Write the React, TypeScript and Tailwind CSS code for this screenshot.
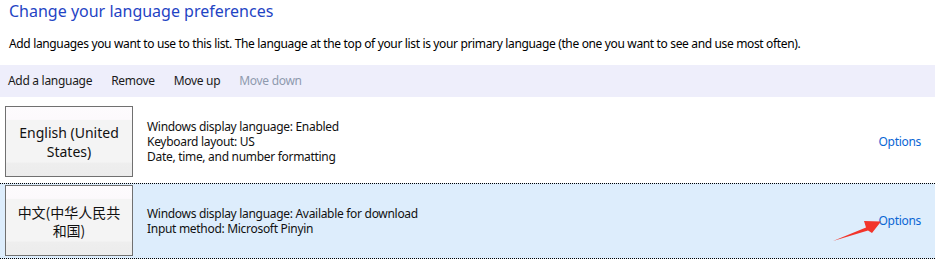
import React from 'react';

const FONT = '"Noto Sans", "Noto Sans CJK SC", sans-serif';

function LangButton({ lines, cjk }: { lines: string[]; cjk?: boolean }) {
  return (
    <div
      className="flex h-[71px] w-[128px] shrink-0 flex-col items-center justify-center border border-[#707070] bg-[linear-gradient(to_bottom,#fdfbfd_0%,#fcf9fc_18%,#f4f4f4_19%,#f4f4f4_80%,#eeeeee_81%,#ececec_100%)] text-[#111]"
      style={{ fontFamily: cjk ? '"Noto Sans CJK SC", sans-serif' : FONT }}
    >
      {lines.map((l) => (
        <div key={l} className={cjk ? 'text-[14px] leading-[18px]' : 'text-[14px] leading-[19px]'}>
          {l}
        </div>
      ))}
    </div>
  );
}

export default function App() {
  return (
    <div className="relative h-[269px] w-[935px] overflow-hidden bg-white text-black" style={{ fontFamily: FONT }}>
      <h1 className="pl-[9px] text-[16px] leading-[22px] text-[#1f44c4]">Change your language preferences</h1>
      <p className="mt-[14px] pl-[9px] text-[12px] leading-[16px] tracking-[-0.35px]">
        Add languages you want to use to this list. The language at the top of your list is your primary language (the one you want to see and use most often).
      </p>

      <div className="mt-[13px] flex h-[32px] items-center gap-[19px] bg-[#eeeefb] pl-[8px] text-[12px] tracking-[-0.3px] text-[#1a1a1a]">
        <span>Add a language</span>
        <span>Remove</span>
        <span>Move up</span>
        <span className="text-[#8f9aae]">Move down</span>
      </div>

      <div className="flex items-center pb-[6px] pl-[5px] pr-[14px] pt-[9px]">
        <LangButton lines={['English (United', 'States)']} />
        <div className="ml-[14px] flex-1 text-[12px] leading-[15px] tracking-[-0.3px] text-[#111]">
          <div>Windows display language: Enabled</div>
          <div>Keyboard layout: US</div>
          <div>Date, time, and number formatting</div>
        </div>
        <a className="text-[12px] tracking-[-0.3px] text-[#0a66d4]">Options</a>
      </div>

      <div className="flex items-center border-y border-dotted border-black bg-[#ddedfc] pb-[2px] pl-[5px] pr-[14px] pt-[1px]">
        <LangButton lines={['中文(中华人民共', '和国)']} cjk />
        <div className="ml-[14px] flex-1 text-[12px] leading-[15px] tracking-[-0.3px] text-[#111]">
          <div>Windows display language: Available for download</div>
          <div>Input method: Microsoft Pinyin</div>
        </div>
        <a className="text-[12px] tracking-[-0.3px] text-[#0a66d4]">Options</a>
      </div>

      <svg className="absolute left-0 top-0" width="935" height="269" viewBox="0 0 935 269">
        <polygon
          points="833,241 866,227.5 864,221 881,221.5 872,233 868,230.5"
          fill="#f2352b"
        />
      </svg>
    </div>
  );
}
